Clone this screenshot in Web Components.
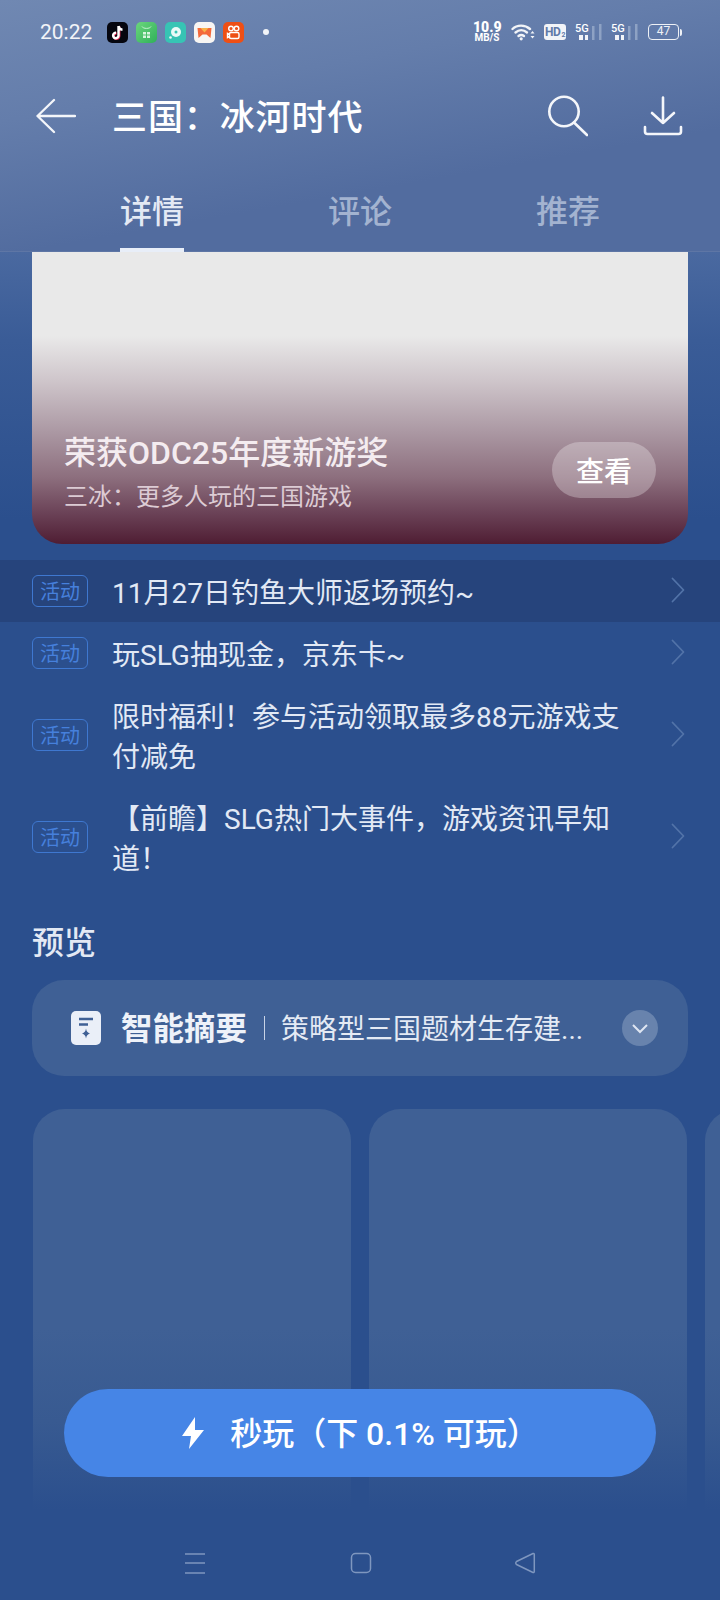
<!DOCTYPE html>
<html lang="zh">
<head>
<meta charset="utf-8">
<title>三国：冰河时代</title>
<style>
  html, body { margin: 0; padding: 0; }
  body {
    width: 720px;
    height: 1600px;
    overflow: hidden;
    background: #2b4f8d;
    font-family: Roboto, "Noto Sans CJK SC", sans-serif;
  }
  app-page { width: 720px; height: 1600px; }
</style>
</head>
<body>
<app-page>
  <div slot="head">
    <status-bar></status-bar>
    <app-bar title="三国：冰河时代"></app-bar>
    <tab-strip></tab-strip>
  </div>
  <promo-card heading="荣获ODC25年度新游奖" sub="三冰：更多人玩的三国游戏" action="查看"></promo-card>
  <activity-list>
    <activity-row active>11月27日钓鱼大师返场预约~</activity-row>
    <activity-row>玩SLG抽现金，京东卡~</activity-row>
    <activity-row>限时福利！参与活动领取最多88元游戏支付减免</activity-row>
    <activity-row>【前瞻】SLG热门大事件，游戏资讯早知道！</activity-row>
  </activity-list>
  <section-title>预览</section-title>
  <summary-card heading="智能摘要" text="策略型三国题材生存建..."></summary-card>
  <shot-strip></shot-strip>
  <play-button slot="over">秒玩（下 0.1% 可玩）</play-button>
  <nav-bar slot="foot"></nav-bar>
</app-page>

<script>
const define = (name, html, Base = HTMLElement) => {
  const template = document.createElement('template')
  template.innerHTML = html
  customElements.define(name, class extends Base {
    constructor() {
      super()
      this.attachShadow({ mode: 'open' }).appendChild(template.content.cloneNode(true))
    }
    connectedCallback() {
      this.shadowRoot.querySelectorAll('[data-attr]').forEach(el => {
        el.textContent = this.getAttribute(el.dataset.attr)
      })
    }
  })
}

define('app-page', `
  <style>
    :host {
      display: flex;
      flex-direction: column;
      position: relative;
      overflow: hidden;
      background: linear-gradient(180deg, #4a69a0 252px, #3a5c97 340px, #2b4f8d 520px);
    }
    .head {
      background: linear-gradient(170deg, #7088b2 0, #647dab 120px, #526c9f 252px);
      position: relative;
      z-index: 1;
    }
    .body { flex: 1; min-height: 0; overflow: hidden; }
  </style>
  <div class="head"><slot name="head"></slot></div>
  <div class="body"><slot></slot></div>
  <slot name="over"></slot>
  <slot name="foot"></slot>
`)

define('status-bar', `
  <style>
    :host {
      display: flex;
      align-items: center;
      height: 64px;
      padding: 0 38px 0 40px;
      color: #fff;
      font-family: Roboto, sans-serif;
    }
    .time { font-size: 21px; color: #f2f4f8; width: 67px; }
    .apps { display: flex; gap: 8px; align-items: center; }
    .apps svg { display: block; width: 21px; height: 21px; }
    .dot { width: 6px; height: 6px; border-radius: 50%; background: #f2f4f8; margin-left: 19px; }
    .right { margin-left: auto; display: flex; align-items: center; }
    .speed { width: 28px; text-align: center; font-weight: 700; line-height: 1; }
    .speed b { display: block; font-size: 14px; line-height: 12px; }
    .speed i { display: block; font-style: normal; font-size: 10px; line-height: 10px; }
    .hd {
      width: 22px; height: 16px; margin-left: 9px; border-radius: 3px; background: #f2f4f8;
      color: #607aa8; font-size: 12px; font-weight: 700; line-height: 16px; text-align: center;
      letter-spacing: -.5px; white-space: nowrap;
    }
    .hd small { font-size: 7px; vertical-align: -1px; margin-left: 1px; }
    .sig { display: block; width: 27px; height: 24px; margin-left: 9px; position: relative; }
    .sig span { position: absolute; left: 0; top: 2px; font-size: 11px; line-height: 14px; font-weight: 500; }
    .sig svg { display: block; }
    .batt {
      box-sizing: border-box; width: 31px; height: 16px; margin-left: 10px; border: 1.5px solid #eef1f6;
      border-radius: 4px; font-size: 12px; line-height: 13px; text-align: center; color: #eef1f6;
    }
    .cap { width: 2px; height: 7px; background: #eef1f6; margin-left: 1px; border-radius: 0 2px 2px 0; }
  </style>
  <span class="time">20:22</span>
  <div class="apps">
    <svg viewBox="0 0 21 21"><rect width="21" height="21" rx="5" fill="#05060f"/><path d="M11.500 4v9.500a2.700 2.700 0 1 1-2.500-2.700" fill="none" stroke="#ee2a55" stroke-width="2.400" transform="translate(.7 .6)"/><path d="M11.500 4v9.500a2.700 2.700 0 1 1-2.500-2.700M11.500 4c.3 2.200 1.800 3.500 4 3.700" fill="none" stroke="#fff" stroke-width="2.400"/></svg>
    <svg viewBox="0 0 21 21"><defs><linearGradient id="g" x1="0" y1="0" x2="1" y2="1"><stop offset="0" stop-color="#6bd67c"/><stop offset="1" stop-color="#2fb05a"/></linearGradient></defs><rect width="21" height="21" rx="5" fill="url(#g)"/><path d="M6 4.500c1 2.500 8 2.500 9 0" fill="none" stroke="#c9f2d3" stroke-width="1"/><path d="M7 10h3v2.500H7zM11 10h3v2.500h-3zM7 13.500h3V16H7zM11 13.500h3V16h-3z" fill="#d6f5dd"/></svg>
    <svg viewBox="0 0 21 21"><rect width="21" height="21" rx="5" fill="#37c4b4"/><circle cx="11" cy="10" r="5" fill="#eafaf7"/><circle cx="11" cy="10" r="1.500" fill="#37c4b4"/><circle cx="5.500" cy="15.500" r="1.300" fill="#eafaf7"/></svg>
    <svg viewBox="0 0 21 21"><rect width="21" height="21" rx="5" fill="#f7f5f3"/><path d="M3.500 6h14l-1 10-4-3.500h-4l-4 3.500z" fill="#f4683a"/><path d="M6.500 6h8l-4 4.500z" fill="#f8b14a"/></svg>
    <svg viewBox="0 0 21 21"><rect width="21" height="21" rx="5" fill="#ee4f15"/><g fill="none" stroke="#fff" stroke-width="1.400"><circle cx="8" cy="6.500" r="2.300"/><circle cx="13.500" cy="6.500" r="2.300"/><rect x="6.500" y="10.500" width="9.500" height="6" rx="1.500"/><path d="M6.500 12.500l-2 -1v4l2-1"/></g></svg>
  </div>
  <span class="dot"></span>
  <div class="right">
    <div class="speed"><b>10.9</b><i>MB/S</i></div>
    <svg style="margin-left:10px;display:block" width="24" height="18" viewBox="0 0 24 18" fill="none" stroke="#f2f4f8" stroke-width="2.400" stroke-linecap="round"><path d="M1.500 6C6 1.500 14 1.500 19 6"/><path d="M4.500 9.500c3.500-3 8-3 11.500 0"/><path d="M7.500 13c2-1.500 3.500-1.500 5.500 0"/><circle cx="10.200" cy="15.800" r="1.600" fill="#f2f4f8" stroke="none"/><path d="M21.500 8l2 2.500h-4zM21.500 15.500l-2-2.500h4z" fill="#f2f4f8" stroke="none"/></svg>
    <div class="hd">HD<small>2</small></div>
    <div class="sig"><span>5G</span><svg width="27" height="24" viewBox="0 0 27 24"><path d="M4 15h4v5H4zM10 15h3v5h-3z" fill="#f2f4f8"/><path d="M17 6h2.500v14H17zM24 4h2.500v16H24z" fill="#8ea2c4"/></svg></div>
    <div class="sig"><span>5G</span><svg width="27" height="24" viewBox="0 0 27 24"><path d="M4 15h4v5H4zM10 15h3v5h-3z" fill="#f2f4f8"/><path d="M17 6h2.500v14H17zM24 4h2.500v16H24z" fill="#8ea2c4"/></svg></div>
    <div class="batt">47</div><div class="cap"></div>
  </div>
`)

define('app-bar', `
  <style>
    :host {
      display: flex;
      align-items: center;
      height: 104px;
      padding: 0 37px 0 36px;
      color: #fff;
    }
    svg { display: block; fill: none; stroke: #f4f6fa; stroke-width: 2.600; stroke-linecap: round; stroke-linejoin: round; }
    h1 {
      margin: 0 0 4px 36px;
      font: 500 35px/1 "Noto Sans CJK SC", sans-serif;
      letter-spacing: .9px;
    }
    .right { margin-left: auto; display: flex; align-items: center; gap: 55px; }
  </style>
  <svg width="40" height="36" viewBox="0 0 40 36" style="stroke-width:2.300"><path d="M18 2L1.500 18 18 34M1.500 18H39"/></svg>
  <h1 data-attr="title"></h1>
  <div class="right">
    <svg width="42" height="42" viewBox="0 0 42 42"><circle cx="18" cy="16.500" r="14.700"/><path d="M28 27.500L41 40"/></svg>
    <svg width="40" height="40" viewBox="0 0 40 40"><path d="M20 1.500V27M9 17l11 10 11-10M2 31v4.500a2.500 2.500 0 0 0 2.500 2.500h31a2.500 2.500 0 0 0 2.500-2.500V31"/></svg>
  </div>
`)

define('tab-strip', `
  <style>
    :host {
      display: grid;
      grid-template-columns: repeat(3, 208px);
      height: 84px;
      padding: 0 48px;
      box-sizing: border-box;
      font: 500 32px/1 "Noto Sans CJK SC", sans-serif;
      color: #a3b3d0;
      box-shadow: inset 0 -1px 0 rgba(255,255,255,.07);
    }
    div { display: flex; justify-content: center; align-items: center; position: relative; padding-bottom: 2px; }
    .on { color: #e3e9f4; }
    .on::after {
      content: "";
      position: absolute;
      left: 72px;
      width: 64px;
      height: 4px;
      bottom: 0;
      background: #e8eef8;
    }
  </style>
  <div class="on">详情</div><div>评论</div><div>推荐</div>
`)

define('promo-card', `
  <style>
    :host {
      display: flex;
      align-items: flex-end;
      justify-content: space-between;
      box-sizing: border-box;
      height: 292px;
      margin: 0 32px;
      padding: 0 32px 46px 32px;
      border-radius: 0 0 30px 30px;
      background: linear-gradient(180deg, #e9e9e9 0, #e9e9e9 84px, #cfc6cb 128px, #ab98a3 180px, #8d6f7e 225px, #6a4156 262px, #4f1d33 292px);
    }
    h2 { margin: 0; font: 500 32px/40px Roboto, "Noto Sans CJK SC", sans-serif; color: #f4ecf0; }
    p { margin: 0; font: 400 24px/44px "Noto Sans CJK SC", sans-serif; color: #dccbd4; }
    .text { margin-bottom: -19px; }
    button {
      width: 104px; height: 56px; margin-bottom: 0; padding: 0; border: 0; border-radius: 28px;
      background: rgba(255,255,255,.28);
      color: #fff; font: 500 28px/56px "Noto Sans CJK SC", sans-serif;
    }
  </style>
  <div class="text"><h2 data-attr="heading"></h2><p data-attr="sub"></p></div>
  <button data-attr="action"></button>
`)

define('activity-list', `
  <style>:host { display: block; margin-top: 16px; }</style>
  <slot></slot>
`)

define('activity-row', `
  <style>
    :host {
      display: grid;
      grid-template-columns: 56px 516px 14px;
      column-gap: 24px;
      align-items: center;
      padding: 10px 34px 10px 32px;
      color: #e2e9f5;
    }
    :host([active]) { background: #26447c; }
    .tag {
      box-sizing: border-box;
      height: 32px;
      border: 1px solid #3f78d0;
      border-radius: 6px;
      font: 400 20px/30px "Noto Sans CJK SC", sans-serif;
      text-align: center;
      color: #4680dc;
    }
    .text { padding-top: 4px; margin-bottom: -2px; font: 400 28px/40px Roboto, "Noto Sans CJK SC", sans-serif; }
    svg { display: block; margin: -2px 0 0 19px; }
  </style>
  <div class="tag">活动</div>
  <div class="text"><slot></slot></div>
  <svg width="14" height="26" viewBox="0 0 14 26" fill="none" stroke="#5273a8" stroke-width="1.800" stroke-linecap="round" stroke-linejoin="round"><path d="M1.500 1.500L12.500 13 1.500 24.500"/></svg>
`)

define('section-title', `
  <style>
    :host {
      display: block;
      margin: 30px 32px 18px;
      font: 500 32px/44px "Noto Sans CJK SC", sans-serif;
      color: #e3e9f4;
    }
  </style>
  <slot></slot>
`)

define('summary-card', `
  <style>
    :host {
      display: flex;
      align-items: center;
      height: 96px;
      margin: 0 32px;
      padding: 0 30px 0 39px;
      border-radius: 32px;
      background: #3f6095;
      color: #eef2f9;
    }
    svg { display: block; flex: none; }
    h3 { margin: 0 0 2px 20px; font: 700 31.500px/1 "Noto Sans CJK SC", sans-serif; white-space: nowrap; }
    i { flex: none; width: 1px; height: 24px; margin: 0 16px 0 17px; background: #c8d3e6; }
    p { margin: 4px 0 0; font: 400 28px/1 Roboto, "Noto Sans CJK SC", sans-serif; white-space: nowrap; color: #e4eaf4; }
    .more { margin-left: auto; }
  </style>
  <svg width="30" height="34" viewBox="0 0 30 34"><rect width="30" height="34" rx="5" fill="#eaeff8"/><path d="M8 8h14M8 13.500h9" stroke="#3f6095" stroke-width="2.400"/><path d="M15 17.500c.5 3 1.500 4 4 5-2.500 1-3.500 2-4 5-.5-3-1.500-4-4-5 2.500-1 3.500-2 4-5z" fill="#3f6095"/></svg>
  <h3 data-attr="heading"></h3>
  <i></i>
  <p data-attr="text"></p>
  <svg class="more" width="36" height="36" viewBox="0 0 36 36"><circle cx="18" cy="18" r="18" fill="#6883ad"/><path d="M11 15l7 7 7-7" fill="none" stroke="#dfe6f2" stroke-width="2"/></svg>
`)

define('shot-strip', `
  <style>
    :host { display: flex; gap: 18px; margin: 33px 0 0 33px; }
    div {
      flex: none;
      width: 318px;
      height: 401px;
      border-radius: 32px 32px 0 0;
      background: linear-gradient(180deg, #3f6095 0, #3f6095 55%, #385a91 78%, #2b4f8d 100%);
    }
  </style>
  <div></div><div></div><div></div>
`)

define('play-button', `
  <style>
    :host {
      position: absolute;
      left: 64px;
      top: 1389px;
      width: 592px;
      height: 88px;
      display: flex;
      align-items: center;
      justify-content: center;
      gap: 25px;
      border-radius: 44px;
      background: #4685e6;
      color: #fff;
      font: 500 32px/1 Roboto, "Noto Sans CJK SC", sans-serif;
      z-index: 2;
    }
    svg { display: block; }
    span { padding-top: 2px; }
  </style>
  <svg width="24" height="32" viewBox="0 0 24 32"><path d="M14 0L1 19h9L8 32l15-19h-9z" fill="#fff"/></svg>
  <span><slot></slot></span>
`)

define('nav-bar', `
  <style>
    :host {
      display: flex;
      justify-content: center;
      align-items: center;
      gap: 144px;
      height: 74px;
      padding-bottom: 0;
      position: relative;
      z-index: 1;
    }
    svg { display: block; fill: none; stroke: #7f97bf; stroke-width: 1.500; }
    svg:last-child { margin-left: -2px; }
  </style>
  <svg width="22" height="22" viewBox="0 0 22 22"><path d="M1 2h20M1 11h20M1 21h20"/></svg>
  <svg width="22" height="22" viewBox="0 0 22 22"><rect x="1.500" y="1.500" width="19" height="19" rx="4"/></svg>
  <svg width="22" height="22" viewBox="0 0 22 22"><path d="M19 1.500c.8-.3 1.300.2 1.300 1v17c0 .8-.6 1.300-1.300 1L2.500 12.500c-1-.7-1-2.200 0-3z" stroke-linejoin="round"/></svg>
`)
</script>
</body>
</html>
